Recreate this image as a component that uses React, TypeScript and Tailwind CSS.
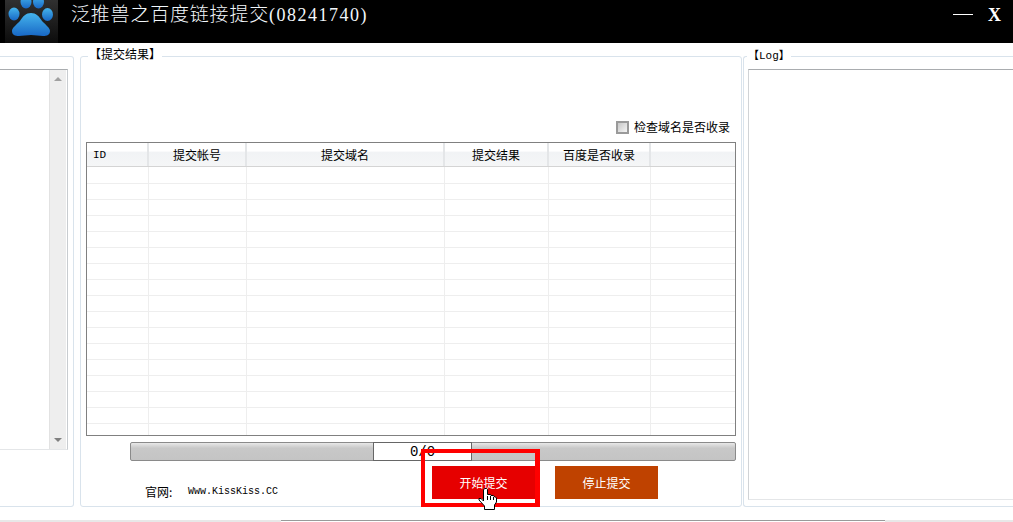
const cols = ["w-[62px]", "w-[98px]", "w-[198px]", "w-[104px]", "w-[102px]", "flex-1"];
const heads = ["ID", "提交帐号", "提交域名", "提交结果", "百度是否收录", ""];
const rows = Array.from({ length: 17 });
const cjk = "font-['Noto_Sans_CJK_SC',sans-serif]";

function Paw() {
  return (
    <svg viewBox="0 0 53 43" className="w-[53px] h-[43px]">
      <defs>
        <linearGradient id="tile" x1="0" y1="0" x2="0" y2="1">
          <stop offset="0" stopColor="#303030" />
          <stop offset="1" stopColor="#0c0c0c" />
        </linearGradient>
        <linearGradient id="blue" x1="0" y1="0" x2="0" y2="1">
          <stop offset="0" stopColor="#45b4ec" />
          <stop offset="1" stopColor="#1868c6" />
        </linearGradient>
      </defs>
      <rect width="53" height="43" fill="url(#tile)" />
      <ellipse cx="9" cy="14" rx="5.500" ry="6.500" fill="url(#blue)" />
      <ellipse cx="21" cy="2" rx="5.500" ry="6.500" fill="url(#blue)" />
      <ellipse cx="33.500" cy="2" rx="5.500" ry="6.500" fill="url(#blue)" />
      <ellipse cx="42.500" cy="14.500" rx="5.500" ry="6.500" fill="url(#blue)" />
      <path d="M26 13c5 0 8 3 11 8 4 4 8 7 8 10 0 4-3 5-7 5-4 0-8-1-12-1s-8 1-12 1c-4 0-7-1-7-5 0-3 4-6 8-10 3-5 6-8 11-8z" fill="url(#blue)" />
    </svg>
  );
}

function Hand() {
  return (
    <svg viewBox="0 0 19 22" className="absolute left-[478px] top-[488px] w-[19px] h-[22px]">
      <path
        d="M6.500 .5h2l1 1v5h3l.5 1h2.500l.5 1 1.500.5 1 1v4l-2 3v4.500h-10V18L1 12v-1.500h2L5.500 13V2z"
        fill="#fff"
        stroke="#000"
        strokeWidth="1"
      />
      <path d="M9.500 8v4M12.500 8v4M15.500 9v3" stroke="#000" strokeWidth="1" />
    </svg>
  );
}

export default function App() {
  return (
    <div className={`relative w-[1013px] h-[522px] overflow-hidden bg-white flex flex-col text-[12px] leading-[14px] text-black ${cjk}`}>
      <header className="h-[43px] bg-black flex items-center shrink-0 pl-[5px]">
        <Paw />
        <div className="ml-[13px] text-[19px] leading-[24px] tracking-[0.8px] text-[#f2f7fb] mb-[14px] mt-[-1px] font-['Noto_Sans_CJK_SC',sans-serif] font-light">
          泛推兽之百度链接提交
          <span className="font-['Liberation_Serif',serif] text-[18px] tracking-[1.5px]">(08241740)</span>
        </div>
        <div className="ml-auto flex items-center mb-[14px] text-white">
          <div className="w-[20px] h-[1px] bg-white mr-[15px]" />
          <span className="font-['Liberation_Serif',serif] font-bold text-[18px] mr-[12px]">X</span>
        </div>
      </header>

      <main className="flex mt-[13px] h-[451px] shrink-0">
        <section className="relative w-[74px] h-full border border-l-0 border-[#d9e3ec] rounded-r-[3px] pt-[12px] pr-[5px] shrink-0">
          <div className="h-[381px] border-t border-r border-b border-[#c8ccd0] border-t-[#a9acaf] border-b-[#e4e6e8] flex justify-end pr-[1px]">
            <div className="w-[17px] h-full bg-[#eeeeee] border-l border-[#e2e2e2] flex flex-col justify-between items-center py-[7px]">
              <div className="w-0 h-0 border-x-[4px] border-x-transparent border-b-[4px] border-b-[#a0a0a0]" />
              <div className="w-0 h-0 border-x-[4px] border-x-transparent border-t-[4px] border-t-[#808080]" />
            </div>
          </div>
        </section>

        <section className="relative ml-[6px] w-[662px] h-full border border-[#d9e3ec] rounded-[3px] px-[5px] shrink-0">
          <div className="absolute left-[7px] top-[-10px] bg-white px-[1px]">【提交结果】</div>

          <div className="flex items-center justify-end h-[16px] mt-[62px] pr-[5px]">
            <span className="w-[13px] h-[13px] border-2 border-[#9a9a9a] bg-gradient-to-br from-[#c8c8c8] to-[#f4f4f4] mr-[5px]" />
            <span className="w-[97px] whitespace-nowrap">检查域名是否收录</span>
          </div>

          <div className="h-[294px] mt-[7px] w-[650px] border border-[#808080] overflow-hidden">
            <div className="flex h-[24px] border-b border-b-[#d4d4d4] bg-gradient-to-b from-white from-35% via-[#f1f3f5] via-40% to-[#f5f6f7]">
              {heads.map((h, i) => (
                <div
                  key={i}
                  className={`${cols[i]} flex items-center ${i === 0 ? "justify-start pl-[6px] font-['Liberation_Mono',monospace] text-[11px]" : "justify-center"} ${i < 5 ? "border-r-2 border-r-[#e4e6e8]" : ""}`}
                >
                  {h}
                </div>
              ))}
            </div>
            {rows.map((_, r) => (
              <div key={r} className={`flex border-b border-b-[#eeeeee] ${r === 0 ? "h-[17px]" : "h-[16px]"}`}>
                {cols.map((c, i) => (
                  <div key={i} className={`${c} ${i < 5 ? "border-r border-r-[#eeeeee]" : ""}`} />
                ))}
              </div>
            ))}
          </div>

          <div className="ml-[44px] mt-[6px] w-[606px] h-[19px] border border-[#8a8a8a] rounded-[2px] bg-gradient-to-b from-[#e8e8e8] via-[#c8c8c8] via-30% to-[#c4c4c4] relative">
            <div className="absolute left-[242px] top-[-1px] h-[19px] w-[99px] border border-[#666666] bg-white flex items-center justify-center font-['Liberation_Mono',monospace] text-[14px]">
              0/0
            </div>
          </div>

          <div className="flex items-center mt-[5px] h-[33px]">
            <div className="ml-[59px] w-[43px] self-end whitespace-nowrap">官网:</div>
            <span className="self-end font-['Liberation_Mono',monospace] text-[10px] w-[244px] whitespace-nowrap">Www.KissKiss.CC</span>
            <button className="w-[103px] h-[33px] bg-[#e60000] text-white">开始提交</button>
            <button className="ml-[20px] w-[103px] h-[33px] bg-[#bf4200] text-white">停止提交</button>
          </div>
        </section>

        <section className="relative ml-[1px] flex-1 h-full border border-r-0 border-[#d9e3ec] rounded-l-[3px] pt-[12px] pl-[4px]">
          <div className="absolute left-[3px] top-[-10px] bg-white px-[1px] font-['Liberation_Mono',monospace] text-[11px]">
            <span className={cjk}>【</span>Log<span className={cjk}>】</span>
          </div>
          <div className="h-[431px] border-l border-t border-b border-[#a9acaf] border-l-[#d0d3d6] border-b-[#e4e6e8]" />
        </section>
      </main>

      <div className="mt-[13px] flex h-[2px] shrink-0">
        <div className="w-[281px] bg-[#e8e8e8]" />
        <div className="w-[604px] border-t border-[#9a9a9a]" />
        <div className="flex-1 bg-[#e8e8e8]" />
      </div>

      <div className="absolute left-[421px] top-[449px] w-[119px] h-[58px] border-[4px] border-r-[5px] border-[#ff0000] pointer-events-none" />
      <Hand />
    </div>
  );
}
